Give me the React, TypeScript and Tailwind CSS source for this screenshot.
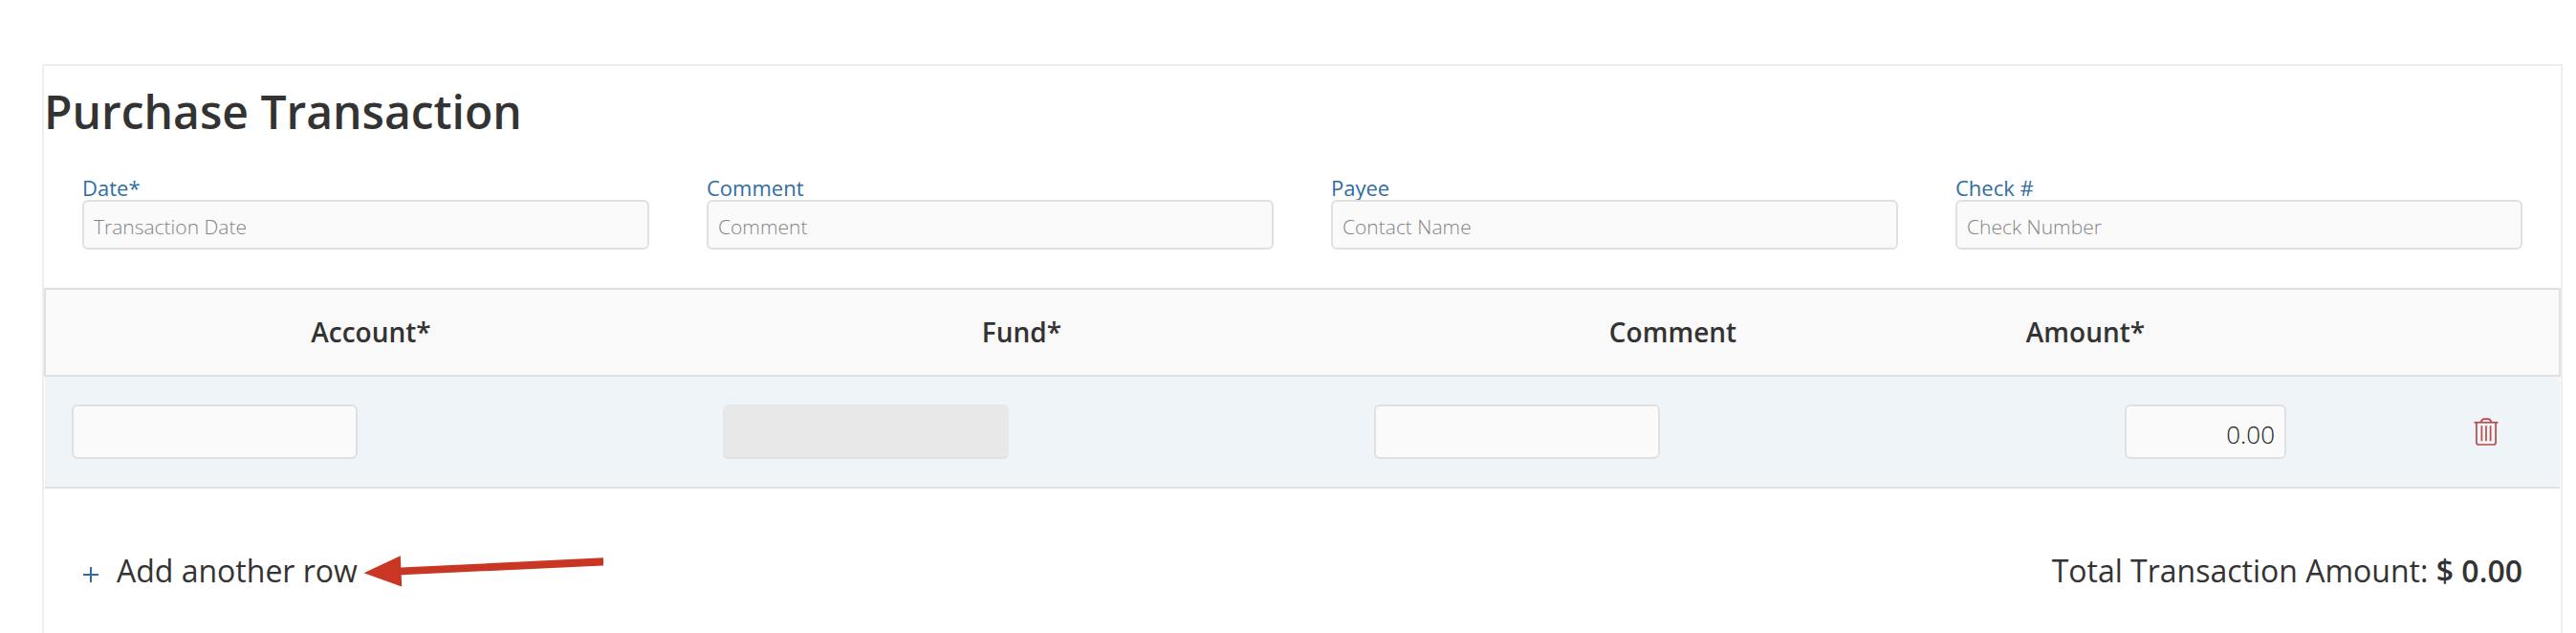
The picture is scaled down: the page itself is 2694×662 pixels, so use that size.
import { useState } from 'react'

const fields = [
  { id: 'date', label: 'Date*', placeholder: 'Transaction Date' },
  { id: 'comment', label: 'Comment', placeholder: 'Comment' },
  { id: 'payee', label: 'Payee', placeholder: 'Contact Name' },
  { id: 'check', label: 'Check #', placeholder: 'Check Number' },
]

const inputBase = 'block border-2 border-[#e0e0e0] bg-[#fafafa] rounded-md pt-1 px-2.5 font-light text-[#222] outline-none'

function TrashIcon() {
  return (
    <svg width="26" height="30" viewBox="0 0 26 30" fill="none" stroke="#b94a48" strokeWidth="1.7" className="block">
      <path d="M0.5 4.8h25" />
      <path d="M7.5 4.8c0.6-2.6 2-3.7 3.6-3.7h3.8c1.6 0 3 1.1 3.6 3.7" />
      <path d="M2.9 4.8v20.7c0 1.6 0.9 2.5 2.5 2.5h15.2c1.6 0 2.5-0.9 2.5-2.5V4.8" />
      <path d="M8.4 8.3v16M13 8.3v16M17.6 8.3v16" />
    </svg>
  )
}

function Arrow() {
  return (
    <svg width="251" height="33" viewBox="0 0 251 33" className="block" aria-hidden="true">
      <path d="M0.5 18.2L38.8 0.2L39.3 12.6L251 2.2V10.5L39.7 20.2L40.2 32.6Z" fill="#c93624" />
    </svg>
  )
}

export default function App() {
  const [rows, setRows] = useState([{ id: 1, amount: '0.00' }])

  const total = rows.reduce((sum, row) => sum + (Number(row.amount) || 0), 0)

  const addRow = () => {
    setRows([...rows, { id: Date.now(), amount: '0.00' }])
  }

  const removeRow = (id: number) => {
    setRows(rows.filter((row) => row.id !== id))
  }

  const changeAmount = (id: number, amount: string) => {
    setRows(rows.map((row) => (row.id === id ? { ...row, amount } : row)))
  }

  return (
    <div className="min-h-screen bg-white pt-[67px] pl-11 pr-3.5 font-['Open_Sans',sans-serif] text-[#333] flex flex-col">
      <main className="flex-1 border-2 border-b-0 border-[#eee] pt-[18px]">
        <h1 className="text-[48px] leading-[60px] font-semibold">Purchase Transaction</h1>

        <div className="grid grid-cols-4 gap-[60px] px-10 pt-9">
          {fields.map((field) => (
            <div key={field.id} className="flex flex-col">
              <label htmlFor={field.id} className="text-[22px] leading-[26px] text-[#2f6da3]">
                {field.label}
              </label>
              <input
                id={field.id}
                type="text"
                placeholder={field.placeholder}
                className={`${inputBase} w-full h-[52px] text-[21px] placeholder:text-[#858585]`}
              />
            </div>
          ))}
        </div>

        <table className="mt-10 w-full table-fixed border-collapse">
          <colgroup>
            <col />
            <col />
            <col />
            <col className="w-[182px]" />
            <col className="w-[251px]" />
            <col className="w-[154px]" />
          </colgroup>
          <thead>
            <tr className="h-[91px] border-2 border-[#e0e0e0] bg-[#f9f9f9] text-[28px] leading-9">
              <th className="pb-0.5 font-semibold">Account*</th>
              <th className="pb-0.5 font-semibold">Fund*</th>
              <th className="pb-0.5 font-semibold">Comment</th>
              <th className="pb-0.5 font-semibold">Amount*</th>
              <td colSpan={2}></td>
            </tr>
          </thead>
          <tbody>
            {rows.map((row) => (
              <tr key={row.id} className="h-[117px] border-b-2 border-[#dfe0e1] bg-[#eff4f9]">
                <td className="pl-7">
                  <input type="text" aria-label="Account" className={`${inputBase} w-[299px] h-[57px] text-[26px]`} />
                </td>
                <td className="pl-7">
                  <input
                    type="text"
                    aria-label="Fund"
                    disabled
                    className="block w-[299px] h-[57px] rounded-md border-b-2 border-[#e0e0e0] bg-[#e8e8e8]"
                  />
                </td>
                <td className="pl-7">
                  <input type="text" aria-label="Comment" className={`${inputBase} w-[299px] h-[57px] text-[26px]`} />
                </td>
                <td colSpan={2}>
                  <input
                    type="text"
                    aria-label="Amount"
                    value={row.amount}
                    onChange={(e) => changeAmount(row.id, e.target.value)}
                    className={`${inputBase} mx-auto w-[169px] h-[57px] text-[26px] text-right`}
                  />
                </td>
                <td>
                  <button type="button" aria-label="Delete row" onClick={() => removeRow(row.id)} className="block mx-auto">
                    <TrashIcon />
                  </button>
                </td>
              </tr>
            ))}
          </tbody>
        </table>

        <div className="flex items-center justify-between px-10 pt-16 pb-10 text-[32px] leading-11">
          <div className="flex items-center gap-1.5">
            <button type="button" onClick={addRow} className="flex items-center gap-[18px]">
              <svg width="18" height="18" viewBox="0 0 18 18" stroke="#2f6da3" strokeWidth="2" className="mt-2">
                <path d="M1 9h16M9 1v16" />
              </svg>
              Add another row
            </button>
            <Arrow />
          </div>
          <p>
            Total Transaction Amount: <strong className="font-semibold">$ {total.toFixed(2)}</strong>
          </p>
        </div>
      </main>
    </div>
  )
}
